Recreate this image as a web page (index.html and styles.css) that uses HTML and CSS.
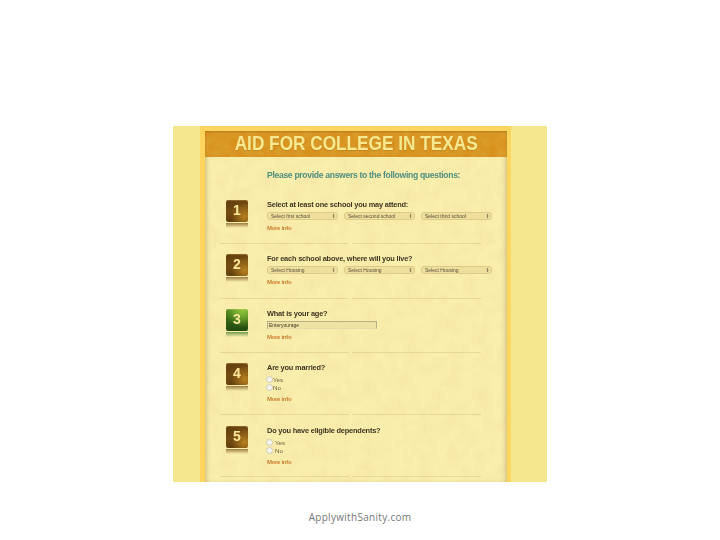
FILE: index.html
```html
<!DOCTYPE html>
<html lang="en">
<head>
    <meta charset="UTF-8">
    <title>Aid for College in Texas</title>
    <link rel="stylesheet" href="styles.css">
</head>
<body>
    <div class="shot">
        <div class="frame">
            <div class="paper">
                <h1 class="banner"><span>AID FOR COLLEGE IN TEXAS</span></h1>
                <h2 class="intro">Please provide answers to the following questions:</h2>

                <div class="row row-1">
                    <div class="step"><span class="num">1</span><span class="shine"></span></div>
                    <div class="body">
                        <div class="question">Select at least one school you may attend:</div>
                        <div class="picks">
                            <label class="pick"><select><option>Select first school</option></select><svg viewBox="0 0 4 6"><path d="M2 0 3.4 2.4H.6zM2 6 .6 3.6h2.8z"/></svg></label>
                            <label class="pick"><select><option>Select second school</option></select><svg viewBox="0 0 4 6"><path d="M2 0 3.4 2.4H.6zM2 6 .6 3.6h2.8z"/></svg></label>
                            <label class="pick"><select><option>Select third school</option></select><svg viewBox="0 0 4 6"><path d="M2 0 3.4 2.4H.6zM2 6 .6 3.6h2.8z"/></svg></label>
                        </div>
                        <a class="more">More info</a>
                    </div>
                </div>

                <div class="row row-2">
                    <div class="step"><span class="num">2</span><span class="shine"></span></div>
                    <div class="body">
                        <div class="question">For each school above, where will you live?</div>
                        <div class="picks">
                            <label class="pick"><select><option>Select Housing</option></select><svg viewBox="0 0 4 6"><path d="M2 0 3.4 2.4H.6zM2 6 .6 3.6h2.8z"/></svg></label>
                            <label class="pick"><select><option>Select Housing</option></select><svg viewBox="0 0 4 6"><path d="M2 0 3.4 2.4H.6zM2 6 .6 3.6h2.8z"/></svg></label>
                            <label class="pick"><select><option>Select Housing</option></select><svg viewBox="0 0 4 6"><path d="M2 0 3.4 2.4H.6zM2 6 .6 3.6h2.8z"/></svg></label>
                        </div>
                        <a class="more">More info</a>
                    </div>
                </div>

                <div class="row row-3">
                    <div class="step green"><span class="num">3</span><span class="shine"></span></div>
                    <div class="body">
                        <div class="question">What is your age?</div>
                        <input class="age" type="text" value="Enteryourage">
                        <a class="more">More info</a>
                    </div>
                </div>

                <div class="row row-4">
                    <div class="step"><span class="num">4</span><span class="shine"></span></div>
                    <div class="body">
                        <div class="question">Are you married?</div>
                        <div class="radios">
                            <label class="radio"><input type="radio" name="married">Yes</label>
                            <label class="radio"><input type="radio" name="married">No</label>
                        </div>
                        <a class="more">More info</a>
                    </div>
                </div>

                <div class="row row-5">
                    <div class="step"><span class="num">5</span><span class="shine"></span></div>
                    <div class="body">
                        <div class="question">Do you have eligible dependents?</div>
                        <div class="radios wide">
                            <label class="radio"><input type="radio" name="deps">Yes</label>
                            <label class="radio"><input type="radio" name="deps">No</label>
                        </div>
                        <a class="more">More info</a>
                    </div>
                </div>
            </div>
        </div>
    </div>
    <div class="site">ApplywithSanity.com</div>
</body>
</html>
```
FILE: styles.css
```css
html, body {
    margin: 0;
    height: 100%;
    overflow: hidden;
}

body {
    background: #fff;
    font-family: "Liberation Sans", Arial, sans-serif;
    padding-top: 126px;
    box-sizing: border-box;
}

.shot {
    width: 374px;
    height: 356px;
    margin-left: 173px;
    background: #f4e78c;
    padding: 0 36px 0 27px;
    box-sizing: border-box;
    overflow: hidden;
}

.frame {
    width: 311px;
    height: 356px;
    background: #fdd55f;
    padding: 5px 4px 0 5px;
    box-sizing: border-box;
}

.paper {
    height: 351px;
    color: #3f3524;
    filter: blur(0.35px);
    background:
        url("data:image/svg+xml,%3Csvg xmlns='http://www.w3.org/2000/svg' width='302' height='351'%3E%3Cfilter id='m'%3E%3CfeTurbulence type='fractalNoise' baseFrequency='.07' numOctaves='3' seed='4'/%3E%3CfeColorMatrix values='0 0 0 0 .85 0 0 0 0 .72 0 0 0 0 .35 .7 0 0 0 -.26'/%3E%3C/filter%3E%3Crect width='302' height='351' filter='url(%23m)'/%3E%3C/svg%3E"),
        #faeeac;
    box-shadow: inset 4px 0 5px -3px rgba(140, 110, 50, 0.45), inset -4px 0 5px -3px rgba(140, 110, 50, 0.45);
}

.banner {
    margin: 0;
    height: 26px;
    background:
        url("data:image/svg+xml,%3Csvg xmlns='http://www.w3.org/2000/svg' width='302' height='26'%3E%3Cfilter id='m'%3E%3CfeTurbulence type='fractalNoise' baseFrequency='.12' numOctaves='3' seed='9'/%3E%3CfeColorMatrix values='0 0 0 0 .7 0 0 0 0 .42 0 0 0 0 .05 .9 0 0 0 -.25'/%3E%3C/filter%3E%3Crect width='302' height='26' filter='url(%23m)'/%3E%3C/svg%3E"),
        #d9911d;
    box-shadow: inset 0 1px 2px rgba(110, 70, 10, 0.35);
    color: #f7e98f;
    font-size: 21px;
    line-height: 24px;
    font-weight: bold;
    text-align: center;
    white-space: nowrap;
    text-shadow: 0 1px 1px rgba(130, 80, 10, 0.25);
}

.banner span {
    display: inline-block;
    transform: scaleX(0.82);
    margin: 0 -30px;
}

.intro {
    margin: 12px 0 0 62px;
    height: 13px;
    color: #4f8f80;
    font-size: 8.6px;
    line-height: 12px;
    letter-spacing: -0.32px;
    font-weight: bold;
    white-space: nowrap;
}

.row {
    display: flex;
    margin: 0 26px 0 15px;
    padding-left: 6px;
    box-sizing: border-box;
    background: linear-gradient(90deg, rgba(190, 165, 90, 0.3) 0 49.6%, transparent 49.6% 50.6%, rgba(190, 165, 90, 0.3) 50.6%) bottom / 100% 1px no-repeat;
}

.row-1 { height: 62px; padding-top: 18px; }
.row-2 { height: 55px; padding-top: 10px; }
.row-3 { height: 54px; padding-top: 10px; }
.row-4 { height: 62px; padding-top: 10px; }
.row-5 { height: 62px; padding-top: 11px; }

.step {
    position: relative;
    width: 22px;
    height: 22px;
    margin-right: 19px;
    flex: none;
    border-radius: 2px;
    background:
        radial-gradient(circle at 85% 75%, #b98320, transparent 55%),
        linear-gradient(160deg, #5f3b0c, #744b12 45%, #553509);
    box-shadow: inset 0 1px 1px rgba(255, 220, 140, 0.25);
    text-align: center;
}

.step.green {
    background:
        radial-gradient(circle at 75% 5%, #8fc63a, transparent 65%),
        linear-gradient(#4f8a1f, #2f5c14 60%, #234a10);
}

.num {
    display: block;
    color: #fbe79a;
    font-size: 14px;
    line-height: 20px;
    font-weight: bold;
}

.shine {
    position: absolute;
    top: 23px;
    left: 0;
    width: 22px;
    height: 5px;
    background: linear-gradient(#9c7c40, rgba(156, 124, 64, 0));
}

.green .shine {
    background: linear-gradient(#6f9a4c, rgba(111, 154, 76, 0));
}

.question {
    height: 9px;
    font-size: 7.4px;
    line-height: 9px;
    letter-spacing: -0.19px;
    font-weight: bold;
    white-space: nowrap;
}

.picks {
    display: flex;
    gap: 6px;
    margin-top: 3px;
}

.pick {
    position: relative;
    display: block;
    width: 71px;
    height: 8px;
}

.pick select {
    appearance: none;
    display: block;
    width: 100%;
    height: 8px;
    margin: 0;
    padding: 0 0 0 3px;
    border: 1px solid #dccb86;
    border-radius: 3px;
    background: #efdf9c;
    color: #5a5040;
    font-family: inherit;
    font-size: 5px;
    line-height: 6px;
    box-sizing: border-box;
}

.pick svg {
    position: absolute;
    top: 2px;
    right: 3px;
    width: 3px;
    height: 4px;
    fill: #4a4030;
}

.age {
    display: block;
    width: 110px;
    height: 8px;
    margin: 3px 0 0;
    padding: 0 1px;
    border: 1px solid #b9b08a;
    border-bottom-color: #e6dba8;
    background: #efe3a4;
    color: #3f3524;
    font-family: inherit;
    font-size: 5px;
    box-sizing: border-box;
}

.radios {
    margin-top: 3px;
    font-size: 6.2px;
    color: #6b6040;
}

.radio {
    display: flex;
    align-items: center;
    height: 8px;
}

.radio input {
    appearance: none;
    width: 7px;
    height: 7px;
    margin: 0 0 0 -1px;
    border: 1px solid #cfccba;
    border-radius: 50%;
    background: #f6f5ee;
    box-sizing: border-box;
}

.wide .radio input {
    margin-right: 2px;
}

.more {
    display: block;
    margin-top: 5px;
    color: #cc7f30;
    font-size: 6px;
    line-height: 7px;
    letter-spacing: -0.3px;
    font-weight: bold;
}

.site {
    margin-top: 28px;
    text-align: center;
    font-family: "Open Sans", sans-serif;
    font-size: 10px;
    line-height: 14px;
    letter-spacing: 0.3px;
    color: #777;
}
```
